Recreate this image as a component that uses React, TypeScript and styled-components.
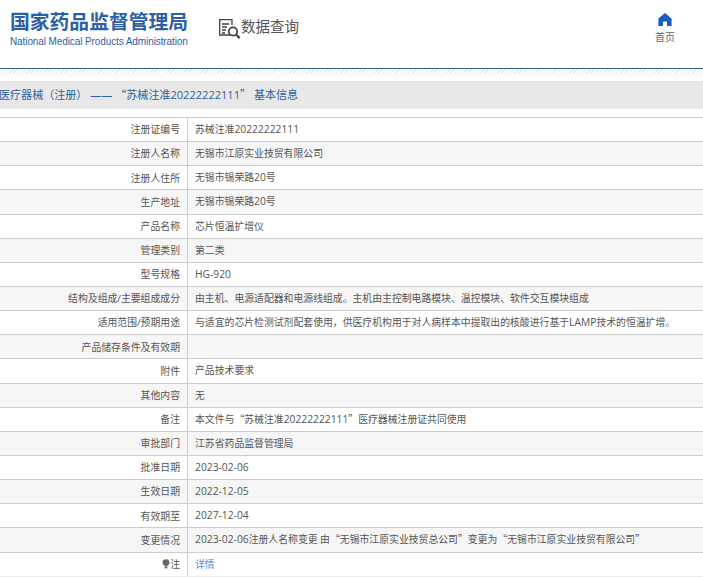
import { FC, Fragment } from 'react';
import styled, { createGlobalStyle } from 'styled-components';

const GlobalStyle = createGlobalStyle`
    html, body {
        margin: 0;
        padding: 0;
        background: #fff;
        overflow: hidden;
    }
    body {
        font-family: "Open Sans", "Noto Sans CJK SC", sans-serif;
        font-size: 10px;
        color: #555;
    }
`;

const Page = styled.div`
    width: 703px;
    height: 577px;
    overflow: hidden;
`;

const Header = styled.header`
    height: 68px;
    display: flex;
    align-items: flex-start;
    border-bottom: 1px solid #2a6496;
`;

const Logo = styled.div`
    margin-left: 10px;
    padding-top: 11px;
    width: 190px;
`;

const LogoTitle = styled.div`
    font-family: "Liberation Sans", "Noto Sans CJK SC", sans-serif;
    font-size: 19.8px;
    line-height: 23px;
    font-weight: 700;
    color: #2c5fa3;
    white-space: nowrap;
`;

const LogoSub = styled.div`
    font-family: "Liberation Sans", sans-serif;
    font-size: 10px;
    letter-spacing: -0.1px;
    line-height: 12px;
    margin-top: 2px;
    color: #2c5fa3;
    white-space: nowrap;
`;

const Query = styled.div`
    margin-left: 18px;
    padding-top: 16px;
    display: flex;
    align-items: flex-start;
    font-size: 14.5px;
    line-height: 22px;
    color: #555;

    svg {
        margin-top: 2px;
    }
`;

const Home = styled.div`
    margin-left: auto;
    margin-right: 28px;
    padding-top: 13px;
    width: 20px;
    display: flex;
    flex-direction: column;
    align-items: center;
    font-size: 10px;
    line-height: 12px;
    color: #666;
`;

const HomeLabel = styled.span`
    margin-top: 5px;
`;

const Hatch = styled.div`
    height: 4px;
    background: repeating-linear-gradient(135deg, #dfe8f0 0 1px, #fff 1px 3px);
`;

const Fade = styled.div`
    height: 8px;
    background: linear-gradient(#fafafa, #fff);
`;

// digits and latin runs sit a little larger than the CJK text around them
const Latin = styled.span`
    font-size: 1.045em;
`;

// curly quotes take the full-width CJK glyph, the latin font's are too narrow
const Quote = styled.span`
    font-family: "Noto Sans CJK SC", sans-serif;
`;

const TitleBar = styled.div`
    height: 28px;
    line-height: 27px;
    margin-left: -1px;
    background: #e8e8e8;
    color: #2c5fa3;
    font-size: 11.05px;
    white-space: pre;
    margin-bottom: 8px;

    ${Latin} {
        font-size: 1em;
    }
`;

const Table = styled.div`
    border-top: 1px solid #ccc;
`;

const Row = styled.div<{ $odd: boolean }>`
    display: grid;
    grid-template-columns: 188px 1fr;
    height: 23.15px;
    border-bottom: 1px solid #ccc;
    background: ${(p) => (p.$odd ? '#f6f6f6' : '#fff')};
    line-height: 22.5px;
    font-size: 9.85px;

    &:last-child {
        border-bottom-color: #ececec;
    }
`;

const Label = styled.div`
    padding-right: 7px;
    border-right: 1px solid #ccc;
    white-space: nowrap;
    display: flex;
    align-items: center;
    justify-content: flex-end;
`;

const Value = styled.div`
    padding-left: 7px;
    white-space: pre;
    overflow: hidden;
`;

const DetailLink = styled.a`
    color: #4a90e2;
    text-decoration: none;
`;

const richText = (text: string) =>
    text.split(/([“”]|[0-9A-Za-z-]+)/).map((part, i) => {
        if (part === '“' || part === '”') return <Quote key={i} lang="zh-CN">{part}</Quote>;
        if (/^[0-9A-Za-z-]+$/.test(part)) return <Latin key={i}>{part}</Latin>;
        return <Fragment key={i}>{part}</Fragment>;
    });

const QueryIcon: FC = () => (
    <svg width="23" height="23" viewBox="0 0 23 23" fill="none" stroke="#444" strokeWidth="1.3">
        <path d="M13 17H1.7V1.7H14V7" />
        <path d="M4 6h7M4 9h5M4 12h4M4 15h3" />
        <circle cx="15" cy="13.5" r="4.2" strokeWidth="1.8" />
        <path d="M18 16.5l3.6 3.6" strokeWidth="2.4" />
    </svg>
);

const HomeIcon: FC = () => (
    <svg width="14" height="13" viewBox="0 0 14 13">
        <path d="M7 0L0.4 5.6V13H5V8.6H9V13H13.6V5.6Z" fill="#1760bd" />
    </svg>
);

const BulbIcon: FC = () => (
    <svg width="8" height="10" viewBox="0 0 8 10">
        <circle cx="4" cy="3.6" r="3.4" fill="#666" />
        <rect x="2.6" y="7.4" width="2.8" height="2" fill="#666" />
    </svg>
);

const rows: [string, string][] = [
    ['注册证编号', '苏械注准20222222111'],
    ['注册人名称', '无锡市江原实业技贸有限公司'],
    ['注册人住所', '无锡市锡荣路20号'],
    ['生产地址', '无锡市锡荣路20号'],
    ['产品名称', '芯片恒温扩增仪'],
    ['管理类别', '第二类'],
    ['型号规格', 'HG-920'],
    ['结构及组成/主要组成成分', '由主机、电源适配器和电源线组成。主机由主控制电路模块、温控模块、软件交互模块组成'],
    ['适用范围/预期用途', '与适宜的芯片检测试剂配套使用，供医疗机构用于对人病样本中提取出的核酸进行基于LAMP技术的恒温扩增。'],
    ['产品储存条件及有效期', ''],
    ['附件', '产品技术要求'],
    ['其他内容', '无'],
    ['备注', '本文件与“苏械注准20222222111”医疗器械注册证共同使用'],
    ['审批部门', '江苏省药品监督管理局'],
    ['批准日期', '2023-02-06'],
    ['生效日期', '2022-12-05'],
    ['有效期至', '2027-12-04'],
    ['变更情况', '2023-02-06注册人名称变更 由“无锡市江原实业技贸总公司”变更为“无锡市江原实业技贸有限公司”'],
];

const App: FC = () => (
    <Page>
        <GlobalStyle />
        <Header>
            <Logo>
                <LogoTitle>国家药品监督管理局</LogoTitle>
                <LogoSub>National Medical Products Administration</LogoSub>
            </Logo>
            <Query>
                <QueryIcon />
                数据查询
            </Query>
            <Home>
                <HomeIcon />
                <HomeLabel>首页</HomeLabel>
            </Home>
        </Header>
        <Hatch />
        <Fade />
        <TitleBar>{richText('医疗器械（注册） —— “苏械注准20222222111” 基本信息')}</TitleBar>
        <Table>
            {rows.map(([label, value], i) => (
                <Row key={label} $odd={i % 2 === 1}>
                    <Label>{label}</Label>
                    <Value>{richText(value)}</Value>
                </Row>
            ))}
            <Row $odd={false}>
                <Label>
                    <BulbIcon />注
                </Label>
                <Value>
                    <DetailLink href="#">详情</DetailLink>
                </Value>
            </Row>
        </Table>
    </Page>
);

export default App;
